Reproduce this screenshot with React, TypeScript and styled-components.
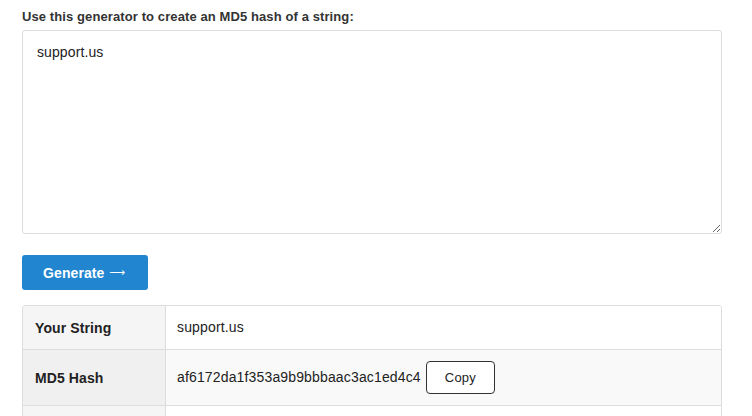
import React from "react";
import styled, { createGlobalStyle } from "styled-components";

const GlobalStyle = createGlobalStyle`
  html, body { margin: 0; padding: 0; background: #fff; overflow: hidden; }
  body { font-family: Arial, "Liberation Sans", sans-serif; color: #333; }
`;

const Page = styled.div`
  padding: 9px 30px 0 22px;
  width: 700px;
`;

const Label = styled.label`
  display: block;
  font-size: 13px;
  font-weight: bold;
  line-height: 15px;
  letter-spacing: 0.1px;
  color: #333;
  margin-bottom: 6px;
`;

const TextArea = styled.textarea`
  display: block;
  box-sizing: border-box;
  width: 700px;
  height: 204px;
  padding: 11px 14px;
  border: 1px solid #ddd;
  border-radius: 3px;
  font-family: Arial, "Liberation Sans", sans-serif;
  font-size: 14px;
  line-height: 20px;
  letter-spacing: 0.1px;
  color: #222;
  resize: both;
  outline: none;
  margin: 0;
`;

const GenerateButton = styled.button`
  display: flex;
  align-items: center;
  margin: 21px 0 15px;
  height: 35px;
  padding: 0 23px 0 21px;
  background: #2185d0;
  color: #fff;
  border: none;
  border-radius: 3px;
  font-family: Arial, "Liberation Sans", sans-serif;
  font-size: 14px;
  font-weight: bold;
  letter-spacing: 0.1px;
  cursor: pointer;
`;

const Arrow = styled.span`
  font-family: "DejaVu Sans", sans-serif;
  font-weight: normal;
  font-size: 11px;
  margin-left: 5px;
  letter-spacing: 0;
  display: inline-block;
`;

const ResultTable = styled.table`
  width: 700px;
  border-collapse: separate;
  border-spacing: 0;
  border: 1px solid #ddd;
  border-radius: 3px;
  overflow: hidden;
  box-sizing: border-box;
`;

const Row = styled.tr<{ $alt?: boolean }>`
  th { background: ${(p) => (p.$alt ? "#f0f0f0" : "#f5f5f5")}; }
  td { background: ${(p) => (p.$alt ? "#f9f9f9" : "#fff")}; }
`;

const HeadCell = styled.th`
  box-sizing: border-box;
  width: 143px;
  padding: 11px 12px;
  text-align: left;
  font-size: 14px;
  font-weight: bold;
  letter-spacing: 0.1px;
  color: #222;
  border-right: 1px solid #ddd;
  border-bottom: 1px solid #ddd;
`;

const DataCell = styled.td`
  padding: 11px 11px;
  font-size: 14px;
  letter-spacing: 0.15px;
  color: #222;
  border-bottom: 1px solid #ddd;
`;

const CellInner = styled.div`
  display: flex;
  align-items: center;
  min-height: 21px;
  line-height: 21px;
`;

const CopyButton = styled.button`
  box-sizing: border-box;
  height: 33px;
  margin-left: 5px;
  padding: 0 18px;
  background: #fff;
  border: 1px solid #333;
  border-radius: 4px;
  font-family: Arial, "Liberation Sans", sans-serif;
  font-size: 13px;
  letter-spacing: 0.2px;
  color: #222;
  cursor: pointer;
`;

export default function App() {
  const input = "support.us";
  const hash = "af6172da1f353a9b9bbbaac3ac1ed4c4";
  return (
    <>
      <GlobalStyle />
      <Page>
        <Label htmlFor="md5-input">Use this generator to create an MD5 hash of a string:</Label>
        <TextArea id="md5-input" defaultValue={input} />
        <GenerateButton>
          Generate<Arrow>⟶</Arrow>
        </GenerateButton>
        <ResultTable>
          <tbody>
            <Row>
              <HeadCell>Your String</HeadCell>
              <DataCell>
                <CellInner>{input}</CellInner>
              </DataCell>
            </Row>
            <Row $alt>
              <HeadCell>MD5 Hash</HeadCell>
              <DataCell>
                <CellInner>
                  {hash}
                  <CopyButton>Copy</CopyButton>
                </CellInner>
              </DataCell>
            </Row>
            <Row>
              <HeadCell>&nbsp;</HeadCell>
              <DataCell>
                <CellInner>&nbsp;</CellInner>
              </DataCell>
            </Row>
          </tbody>
        </ResultTable>
      </Page>
    </>
  );
}
